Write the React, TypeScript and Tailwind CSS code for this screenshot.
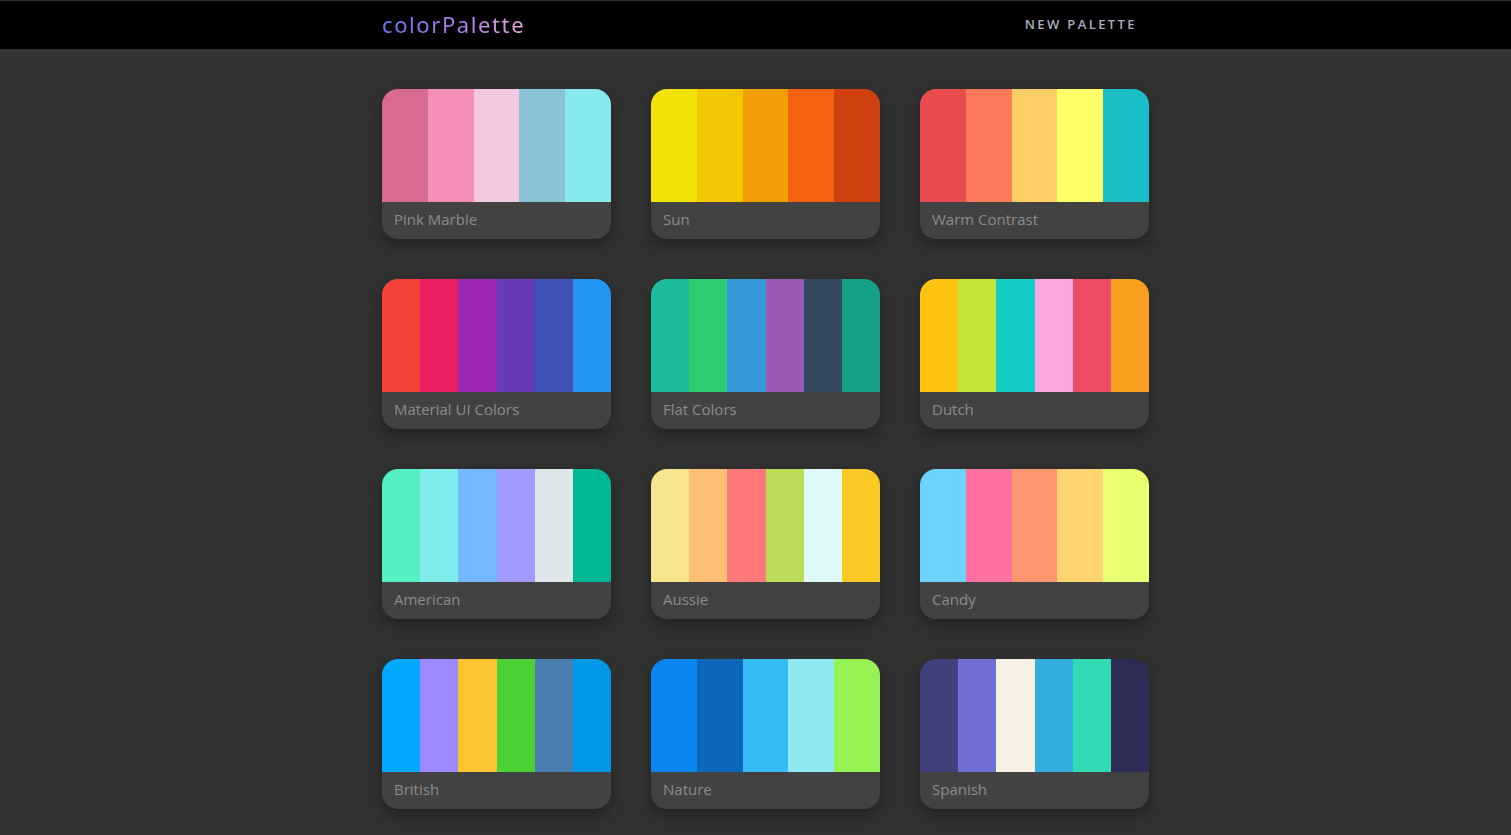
import React from "react";

const palettes: { name: string; colors: string[] }[] = [
  { name: "Pink Marble", colors: ["#d96b93", "#f48fb9", "#f4c8e0", "#8bc3d9", "#88e8f0"] },
  { name: "Sun", colors: ["#f2e205", "#f2c803", "#f29f05", "#f2620f", "#d0400f"] },
  { name: "Warm Contrast", colors: ["#e84c4c", "#ff7a5a", "#fdcf64", "#ffff66", "#1bbec6"] },
  { name: "Material UI Colors", colors: ["#f44336", "#e91e63", "#9c27b0", "#673ab7", "#3f51b5", "#2196f3"] },
  { name: "Flat Colors", colors: ["#1abc9c", "#2ecc71", "#3498db", "#9b59b6", "#34495e", "#16a085"] },
  { name: "Dutch", colors: ["#ffc312", "#c4e538", "#12cbc4", "#fda7df", "#ed4c67", "#f79f1f"] },
  { name: "American", colors: ["#55efc4", "#81ecec", "#74b9ff", "#a29bfe", "#dfe6e9", "#00b894"] },
  { name: "Aussie", colors: ["#f6e58d", "#ffbe76", "#ff7979", "#badc58", "#dff9fb", "#f9ca24"] },
  { name: "Candy", colors: ["#6cd4ff", "#ff6fa0", "#ff9670", "#ffd470", "#e9ff70"] },
  { name: "British", colors: ["#00a8ff", "#9c88ff", "#fbc531", "#4cd137", "#487eb0", "#0097e6"] },
  { name: "Nature", colors: ["#0984f0", "#0b67b9", "#35bcf2", "#8fe9f2", "#96f252"] },
  { name: "Spanish", colors: ["#40407a", "#706fd3", "#f7f1e3", "#34ace0", "#33d9b2", "#2c2c54"] },
];

export default function App() {
  return (
    <div
      className="min-h-[835px] bg-[#323232]"
      style={{ fontFamily: "'Open Sans', 'Noto Sans', sans-serif" }}
    >
      <header className="h-[49px] bg-black border-t border-[#2e2e2e]">
        <div className="w-[787px] mx-auto pl-[20px] pr-[12px] h-full flex items-center justify-between">
          <span
            className="text-[22px] tracking-[1.6px] leading-none pb-[3px] bg-gradient-to-r from-[#6c74f2] via-[#a77de8] to-[#eaa6e2] bg-clip-text text-transparent"
            style={{ fontFamily: "'Noto Sans', sans-serif" }}
          >
            colorPalette
          </span>
          <span className="text-[13px] tracking-[2.4px] text-[#a9b0bf] font-semibold">NEW PALETTE</span>
        </div>
      </header>
      <main className="w-[787px] mx-auto pl-[20px] pt-[40px] pb-[40px]">
        <div className="grid grid-cols-[229px_229px_229px] gap-[40px]">
          {palettes.map((p) => (
            <div
              key={p.name}
              className="h-[150px] rounded-[16px] overflow-hidden bg-[#424242] shadow-[0_6px_16px_rgba(0,0,0,0.35)] flex flex-col"
            >
              <div className="h-[113px] flex">
                {p.colors.map((c, i) => (
                  <div key={i} className="flex-1" style={{ backgroundColor: c }} />
                ))}
              </div>
              <div className="flex-1 flex items-center pl-[12px] pb-[2px] text-[15px] text-[#8c8c8c] font-medium">
                {p.name}
              </div>
            </div>
          ))}
        </div>
      </main>
    </div>
  );
}
